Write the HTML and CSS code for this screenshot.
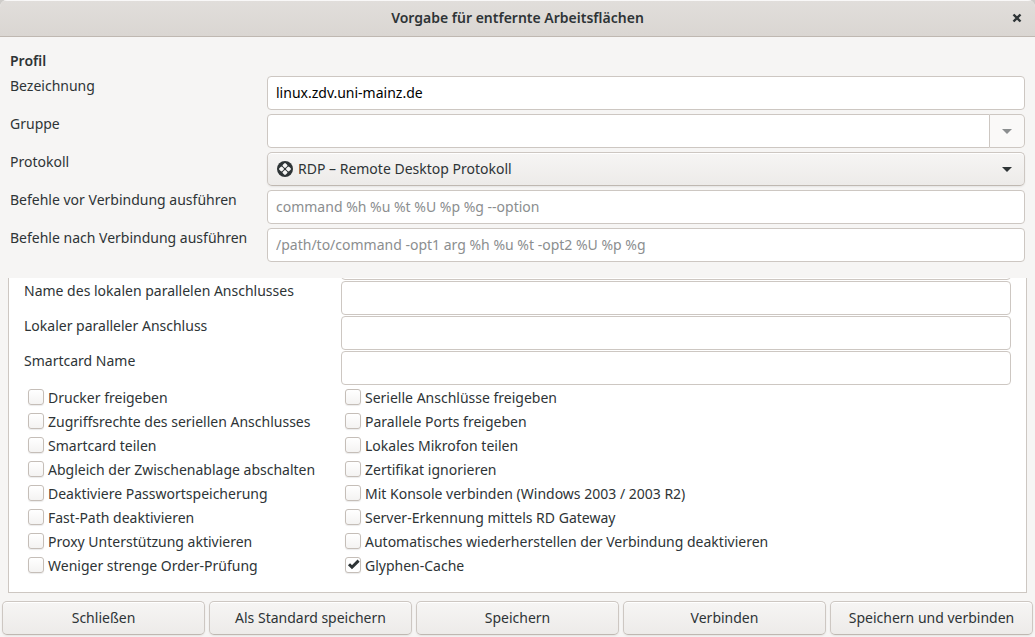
FILE: index.html
```html
<!DOCTYPE html>
<html lang="de">
<head>
<meta charset="utf-8">
<title>Vorgabe für entfernte Arbeitsflächen</title>
<link rel="stylesheet" href="styles.css">
</head>
<body>
<form class="dialog">
  <header class="titlebar">
    <h1 class="title">Vorgabe für entfernte Arbeitsflächen</h1>
    <button class="close" type="button">
      <svg width="10" height="10" viewBox="0 0 10 10"><path d="M1.5 1.5 8.5 8.5M8.5 1.5 1.5 8.5" stroke="#2e3436" stroke-width="2.4" fill="none"/></svg>
    </button>
  </header>

  <section class="profile">
    <h2 class="heading">Profil</h2>
    <div class="fields">
      <label class="label" for="name">Bezeichnung</label>
      <input class="entry" id="name" type="text" value="linux.zdv.uni-mainz.de">

      <label class="label" for="group">Gruppe</label>
      <div class="combo">
        <input class="entry combo-entry" id="group" type="text">
        <button class="combo-button" type="button">
          <svg width="10" height="5" viewBox="0 0 10 5"><path d="M0 0H10L5 5Z" fill="#8b8e8f"/></svg>
        </button>
      </div>

      <label class="label" for="protocol">Protokoll</label>
      <div class="select-wrap">
        <select class="select" id="protocol">
          <option>RDP – Remote Desktop Protokoll</option>
        </select>
        <svg class="select-icon" width="16" height="16" viewBox="0 0 16 16">
          <circle cx="8" cy="8" r="8" fill="#2e3436"/>
          <g fill="#f6f5f4">
            <rect x="-2.1" y="-2.1" width="4.2" height="4.2" rx="1.2" transform="translate(8 4.5) rotate(45)"/>
            <rect x="-2.1" y="-2.1" width="4.2" height="4.2" rx="1.2" transform="translate(4.5 8) rotate(45)"/>
            <rect x="-2.1" y="-2.1" width="4.2" height="4.2" rx="1.2" transform="translate(11.5 8) rotate(45)"/>
            <rect x="-2.1" y="-2.1" width="4.2" height="4.2" rx="1.2" transform="translate(8 11.5) rotate(45)"/>
          </g>
        </svg>
        <svg class="select-arrow" width="10" height="5" viewBox="0 0 10 5"><path d="M0 0H10L5 5Z" fill="#2e3436"/></svg>
      </div>

      <label class="label" for="before">Befehle vor Verbindung ausführen</label>
      <input class="entry" id="before" type="text" placeholder="command %h %u %t %U %p %g --option">

      <label class="label" for="after">Befehle nach Verbindung ausführen</label>
      <input class="entry" id="after" type="text" placeholder="/path/to/command -opt1 arg %h %u %t -opt2 %U %p %g">
    </div>
  </section>

  <section class="panel">
    <div class="settings">
      <input class="entry second-column" type="text">
      <label class="label" for="parallel-name">Name des lokalen parallelen Anschlusses</label>
      <input class="entry" id="parallel-name" type="text">
      <label class="label" for="parallel-port">Lokaler paralleler Anschluss</label>
      <input class="entry" id="parallel-port" type="text">
      <label class="label" for="smartcard">Smartcard Name</label>
      <input class="entry" id="smartcard" type="text">
    </div>
    <div class="checks">
      <label class="check"><input class="box" type="checkbox">Drucker freigeben</label>
      <label class="check"><input class="box" type="checkbox">Serielle Anschlüsse freigeben</label>
      <label class="check"><input class="box" type="checkbox">Zugriffsrechte des seriellen Anschlusses</label>
      <label class="check"><input class="box" type="checkbox">Parallele Ports freigeben</label>
      <label class="check"><input class="box" type="checkbox">Smartcard teilen</label>
      <label class="check"><input class="box" type="checkbox">Lokales Mikrofon teilen</label>
      <label class="check"><input class="box" type="checkbox">Abgleich der Zwischenablage abschalten</label>
      <label class="check"><input class="box" type="checkbox">Zertifikat ignorieren</label>
      <label class="check"><input class="box" type="checkbox">Deaktiviere Passwortspeicherung</label>
      <label class="check"><input class="box" type="checkbox">Mit Konsole verbinden (Windows 2003 / 2003 R2)</label>
      <label class="check"><input class="box" type="checkbox">Fast-Path deaktivieren</label>
      <label class="check"><input class="box" type="checkbox">Server-Erkennung mittels RD Gateway</label>
      <label class="check"><input class="box" type="checkbox">Proxy Unterstützung aktivieren</label>
      <label class="check"><input class="box" type="checkbox">Automatisches wiederherstellen der Verbindung deaktivieren</label>
      <label class="check"><input class="box" type="checkbox">Weniger strenge Order-Prüfung</label>
      <label class="check"><input class="box" type="checkbox" checked>Glyphen-Cache</label>
    </div>
  </section>

  <footer class="actions">
    <button class="button" type="button">Schließen</button>
    <button class="button" type="button">Als Standard speichern</button>
    <button class="button" type="button">Speichern</button>
    <button class="button" type="button">Verbinden</button>
    <button class="button" type="button">Speichern und verbinden</button>
  </footer>
</form>
</body>
</html>
```
FILE: styles.css
```css
* { box-sizing: border-box; }

body {
  margin: 0;
  background: #cfcdca;
  color: #2e3436;
  font: 14px/20px "Noto Sans", sans-serif;
}

input, select, button { font: inherit; color: inherit; margin: 0; }

.dialog {
  display: flex;
  flex-direction: column;
  height: 100vh;
  background: #f6f5f4;
  border-radius: 7px 7px 0 0;
  overflow: hidden;
}

.titlebar {
  display: grid;
  grid-template-columns: 36px 1fr 36px;
  align-items: center;
  flex: none;
  height: 37px;
  border-bottom: 1px solid #bfb8b1;
  background: linear-gradient(#e1dedb, #dad6d2);
  box-shadow: inset 0 1px #f9f8f8;
}

.title {
  grid-column: 2;
  margin: 0;
  font-size: 14px;
  font-weight: 600;
  text-align: center;
}

.close {
  display: flex;
  align-items: center;
  justify-content: center;
  height: 36px;
  padding: 0;
  border: 0;
  background: none;
}

.profile { padding: 14px 10px 16px; }

.heading {
  margin: 0 0 5px;
  font-size: 14px;
  font-weight: 600;
}

.fields {
  display: grid;
  grid-template-columns: 253px 1fr;
  gap: 4px;
}

.label { align-self: start; }

.entry {
  width: 100%;
  min-width: 0;
  height: 34px;
  padding: 0 8px 2px;
  border: 1px solid #cdc7c2;
  border-radius: 4px;
  background: #fff;
  color: #000;
}

.entry::placeholder { color: #8b8e8f; opacity: 1; }

.combo { display: flex; }

.combo-entry { flex: 1; border-radius: 4px 0 0 4px; }

.combo-button {
  display: flex;
  align-items: center;
  justify-content: center;
  width: 35px;
  padding: 0;
  border: 1px solid #cdc7c2;
  border-left: 0;
  border-radius: 0 5px 5px 0;
  background: #faf9f8;
}

.select-wrap { position: relative; }

.select, .button {
  height: 34px;
  border: 1px solid #cdc7c2;
  border-bottom-color: #bfb8b1;
  border-radius: 5px;
  background: linear-gradient(#f6f5f4, #edebe9);
  box-shadow: inset 0 1px #fff, 0 1px 2px rgba(0, 0, 0, 0.07);
}

.select {
  display: block;
  width: 100%;
  padding: 0 30px;
  appearance: none;
}

.select-icon { position: absolute; left: 10px; top: 9px; }

.select-arrow { position: absolute; right: 13px; top: 15px; }

.panel {
  display: flex;
  flex: 1;
  flex-direction: column;
  justify-content: flex-end;
  min-height: 0;
  margin: 0 8px;
  padding: 0 15px 14px;
  overflow: hidden;
  border: 1px solid #cdc7c2;
  border-top: 0;
  background: #fff;
}

.settings {
  display: grid;
  grid-template-columns: 316px 1fr;
  gap: 1px;
}

.second-column { grid-column: 2; }

.checks {
  display: grid;
  grid-template-columns: 317px 1fr;
  padding: 1px 0 0 4px;
}

.check {
  display: flex;
  align-items: center;
  gap: 4px;
  height: 24px;
  white-space: nowrap;
}

.box {
  width: 16px;
  height: 16px;
  margin-bottom: 2px;
  border: 1px solid #c5beb8;
  border-radius: 3px;
  background: linear-gradient(#fff, #f4f3f2);
  box-shadow: 0 1px 1px rgba(0, 0, 0, 0.08);
  appearance: none;
}

.box:checked {
  background: url("data:image/svg+xml,%3Csvg xmlns='http://www.w3.org/2000/svg' viewBox='0 0 14 14'%3E%3Cpath d='M3 6.2 L6 9.2 L12.6 2.6' fill='none' stroke='%232e3436' stroke-width='3'/%3E%3C/svg%3E") center / 14px 14px no-repeat #fff;
}

.actions {
  display: grid;
  grid-template-columns: repeat(5, 1fr);
  flex: none;
  gap: 4px;
  padding: 8px 2px 2px;
}

.button { padding: 0 8px; white-space: nowrap; }
```
